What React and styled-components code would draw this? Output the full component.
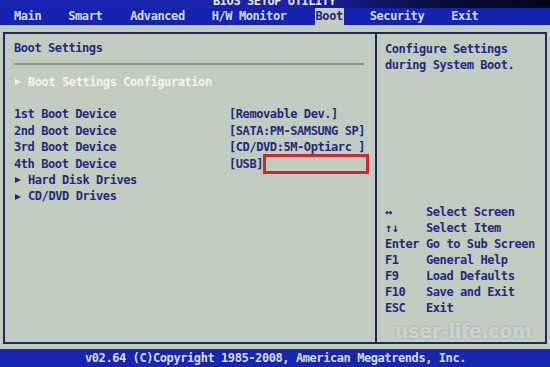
import React from 'react';
import styled, {createGlobalStyle} from 'styled-components';

const GlobalStyle = createGlobalStyle`
  html, body {
    margin: 0;
    padding: 0;
    background: #c3ccc0;
  }
`
const Screen = styled.div`
  position: relative;
  width: 550px;
  height: 367px;
  display: flex;
  flex-direction: column;
  overflow: hidden;
  font-family: "DejaVu Sans Mono", "Liberation Mono", monospace;
  font-weight: bold;
  font-size: 12px;
  letter-spacing: -0.42px;
  background: #c3ccc0;
`
const TitleStrip = styled.div`
  height: 8px;
  overflow: hidden;
  background: linear-gradient(90deg, #1b27b4 0%, #1822a8 55%, #0a0d40 78%, #05061a 100%);
`
const Title = styled.div`
  margin: -6px 0 0 213px;
  line-height: 14px;
  color: #e8e8f0;
`
const MenuBar = styled.div`
  height: 17px;
  display: flex;
  align-items: center;
  background: #1424b0;
`
const MenuItem = styled.div`
  margin-left: ${props => props.left}px;
  padding: 0 1px;
  line-height: 17px;
  color: ${props => props.active ? '#1c2878' : '#d4d8f4'};
  background: ${props => props.active ? '#c7cbc6' : 'transparent'};
`
const Body = styled.div`
  flex: 1;
  padding: 7px 3px 5px 3px;
`
const Frame = styled.div`
  height: 100%;
  box-sizing: border-box;
  border: 2px solid #1e2a58;
  display: grid;
  grid-template-columns: 370px 1fr;
`
const LeftPanel = styled.div`
  padding: 6px 0 0 9px;
  line-height: 16.4px;
  color: #1e2b80;
`
const Heading = styled.div`
  line-height: 16px;
`
const Rule = styled.div`
  height: 2px;
  margin: 7px 11px 9px 0;
  background: #8a918b;
`
const Line = styled.div`
  display: flex;
  align-items: center;
  height: 16.4px;
  color: ${props => props.light ? '#f4f5ef' : '#1e2b80'};
  margin-bottom: ${props => props.gap ? '16px' : '0'};
`
const Arrow = styled.span`
  width: 0;
  height: 0;
  margin: 0 7px 0 1px;
  border-top: 3.5px solid transparent;
  border-bottom: 3.5px solid transparent;
  border-left: 6px solid ${props => props.light ? '#f4f5ef' : '#1e2b80'};
`
const Label = styled.span`
  width: 215px;
`
const Value = styled.span`
  display: flex;
  align-items: center;
`
const Marker = styled.span`
  width: 106px;
  height: 20px;
  margin: -2px 0;
  box-sizing: border-box;
  border: 3px solid #d2272c;
`
const RightPanel = styled.div`
  display: flex;
  flex-direction: column;
  justify-content: space-between;
  border-left: 2px solid #1e2a58;
  padding: 7px 0 26px 8px;
  line-height: 16px;
  color: #1e2b80;
`
const KeyRow = styled.div`
  display: grid;
  grid-template-columns: 41px 1fr;
`
const Footer = styled.div`
  height: 18px;
  line-height: 18px;
  text-align: center;
  background: #1626b2;
  color: #d8dae8;
  padding-left: 1px;
`
const Watermark = styled.div`
  position: absolute;
  left: 395px;
  top: 320px;
  font-family: "DejaVu Sans", sans-serif;
  font-size: 19px;
  font-weight: bold;
  letter-spacing: -0.3px;
  color: rgba(240, 242, 240, 0.6);
  text-shadow: 0 0 2px rgba(110, 115, 115, 0.55);
`

const menu = [
  {name: 'Main', left: 13},
  {name: 'Smart', left: 25},
  {name: 'Advanced', left: 26},
  {name: 'H/W Monitor', left: 25},
  {name: 'Boot', left: 27, active: true},
  {name: 'Security', left: 25},
  {name: 'Exit', left: 25},
];

const devices = [
  ['1st Boot Device', '[Removable Dev.]'],
  ['2nd Boot Device', '[SATA:PM-SAMSUNG SP]'],
  ['3rd Boot Device', '[CD/DVD:5M-Optiarc ]'],
  ['4th Boot Device', '[USB]', true],
];

const keys = [
  ['↔', 'Select Screen'],
  ['↑↓', 'Select Item'],
  ['Enter', 'Go to Sub Screen'],
  ['F1', 'General Help'],
  ['F9', 'Load Defaults'],
  ['F10', 'Save and Exit'],
  ['ESC', 'Exit'],
];

function App() {
  return (
    <Screen>
      <GlobalStyle/>
      <TitleStrip>
        <Title>BIOS SETUP UTILITY</Title>
      </TitleStrip>
      <MenuBar>
        {menu.map(item => (
          <MenuItem key={item.name} left={item.left} active={item.active}>{item.name}</MenuItem>
        ))}
      </MenuBar>
      <Body>
        <Frame>
          <LeftPanel>
            <Heading>Boot Settings</Heading>
            <Rule/>
            <Line light gap><Arrow light/>Boot Settings Configuration</Line>
            {devices.map(([label, value, marked]) => (
              <Line key={label}>
                <Label>{label}</Label>
                <Value>{value}{marked && <Marker/>}</Value>
              </Line>
            ))}
            <Line><Arrow/>Hard Disk Drives</Line>
            <Line><Arrow/>CD/DVD Drives</Line>
          </LeftPanel>
          <RightPanel>
            <div>
              Configure Settings<br/>during System Boot.
            </div>
            <div>
              {keys.map(([key, desc]) => (
                <KeyRow key={key}><span>{key}</span><span>{desc}</span></KeyRow>
              ))}
            </div>
          </RightPanel>
        </Frame>
      </Body>
      <Footer>v02.64 (C)Copyright 1985-2008, American Megatrends, Inc.</Footer>
      <Watermark>user-life.com</Watermark>
    </Screen>
  )
}

export default App;
